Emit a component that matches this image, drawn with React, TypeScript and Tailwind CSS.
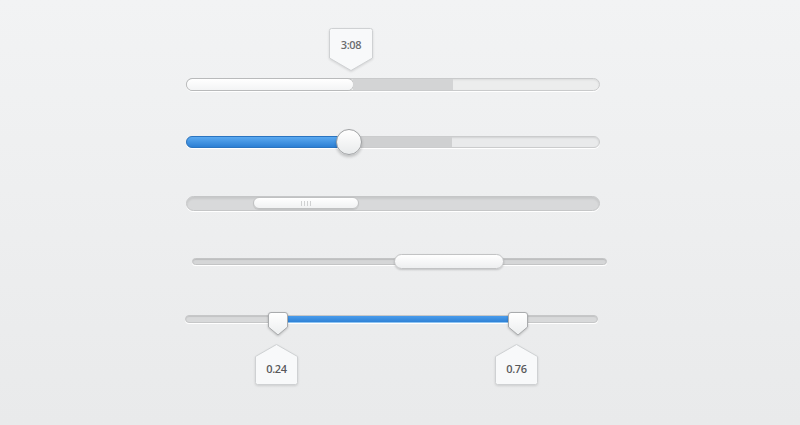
import React from "react";

const font = { fontFamily: "'Open Sans', Lato, sans-serif" };

function DownTip({ label }: { label: string }) {
  return (
    <div className="absolute left-[142px] top-[-51px] w-[44px] h-[43px]">
      <svg width="44" height="43" viewBox="0 0 44 43" className="absolute inset-0 drop-shadow-[0_1px_1px_rgba(0,0,0,0.12)]">
        <path d="M2.5 0.5 H41.5 Q43.5 0.5 43.5 2.5 V30 L22 42.5 L0.5 30 V2.5 Q0.5 0.5 2.5 0.5 Z" fill="#f8f9fa" stroke="#cfd1d3" />
      </svg>
      <div className="relative pt-[9px] text-center text-[11px] font-semibold text-[#6a6c6e] tracking-[-0.4px]" style={font}>
        {label}
      </div>
    </div>
  );
}

function UpTip({ label, left }: { label: string; left: string }) {
  return (
    <div className={`absolute top-[28px] w-[43px] h-[41px] ${left}`}>
      <svg width="43" height="41" viewBox="0 0 43 41" className="absolute inset-0 drop-shadow-[0_1px_1px_rgba(0,0,0,0.12)]">
        <path d="M21.5 0.5 L42.5 12.5 V38.5 Q42.5 40.5 40.5 40.5 H2.5 Q0.5 40.5 0.5 38.5 V12.5 Z" fill="#f8f9fa" stroke="#cfd1d3" />
      </svg>
      <div className="relative pt-[17px] text-center text-[11px] font-semibold text-[#58595b] tracking-[-0.4px]" style={font}>
        {label}
      </div>
    </div>
  );
}

function Shield({ left }: { left: string }) {
  return (
    <div className={`absolute top-[-4px] w-[20px] h-[24px] ${left}`}>
      <svg width="20" height="24" viewBox="0 0 20 24" className="drop-shadow-[0_1px_1px_rgba(0,0,0,0.2)]">
        <defs>
          <linearGradient id="sg" x1="0" y1="0" x2="0" y2="1">
            <stop offset="0" stopColor="#ffffff" />
            <stop offset="1" stopColor="#eceeef" />
          </linearGradient>
        </defs>
        <path d="M3 0.5 H17 Q19.5 0.5 19.5 3 V15 L10 23 L0.5 15 V3 Q0.5 0.5 3 0.5 Z" fill="url(#sg)" stroke="#a9abad" />
      </svg>
    </div>
  );
}

export default function App() {
  return (
    <div className="w-[800px] h-[425px] bg-gradient-to-b from-[#f2f3f4] to-[#e9eaeb] flex flex-col pt-[78px]" style={font}>
      {/* Slider 1: progress with buffer */}
      <div className="relative ml-[186px] w-[414px] h-[13px] rounded-full bg-[#eceded] border border-[#c9cacb] shadow-[inset_0_1px_2px_rgba(0,0,0,0.08),0_1px_0_#ffffff] flex">
        <div className="w-[166px] h-full rounded-full bg-gradient-to-b from-[#ffffff] to-[#f3f4f5] shadow-[0_0_0_1px_#b9babb]" />
        <div className="w-[100px] h-full bg-[#d3d4d5]" />
        <DownTip label="3:08" />
      </div>

      {/* Slider 2: blue fill with round knob */}
      <div className="relative mt-[45px] ml-[186px] w-[414px] h-[12px] rounded-full bg-[#e9eaeb] border border-[#cbcccd] shadow-[inset_0_1px_2px_rgba(0,0,0,0.1),0_1px_0_#ffffff] flex">
        <div className="w-[163px] -m-px h-[12px] rounded-l-full bg-gradient-to-b from-[#5aa9f0] to-[#2b7fd4] border border-[#2a74c0]" />
        <div className="w-[104px] h-full bg-[#cfd0d1]" />
        <div className="absolute left-[149px] top-[-8px] w-[26px] h-[26px] rounded-full bg-gradient-to-b from-[#ffffff] to-[#e9ebec] border border-[#9fa1a3] shadow-[0_2px_3px_rgba(0,0,0,0.2)]" />
      </div>

      {/* Slider 3: scrollbar */}
      <div className="mt-[48px] ml-[186px] w-[414px] h-[15px] rounded-full bg-[#d8d9da] border border-[#c5c6c7] shadow-[inset_0_2px_2px_rgba(0,0,0,0.08),0_1px_0_#ffffff] flex pl-[66px]">
        <div className="w-[106px] h-[12px] rounded-full bg-gradient-to-b from-[#ffffff] to-[#f1f2f3] border border-[#c0c1c2] shadow-[0_1px_1px_rgba(0,0,0,0.1)] flex items-center justify-center gap-[2px]">
          <div className="w-px h-[5px] bg-[#d0d1d2]" />
          <div className="w-px h-[5px] bg-[#d0d1d2]" />
          <div className="w-px h-[5px] bg-[#d0d1d2]" />
          <div className="w-px h-[5px] bg-[#d0d1d2]" />
        </div>
      </div>

      {/* Slider 4: thin track with pill thumb */}
      <div className="mt-[47px] ml-[192px] w-[415px] h-[7px] rounded-full bg-[#d5d6d7] border border-[#c3c4c5] shadow-[inset_0_1px_1px_rgba(0,0,0,0.12),0_1px_0_#ffffff] flex items-center pl-[201px]">
        <div className="w-[110px] h-[15px] shrink-0 rounded-full bg-gradient-to-b from-[#ffffff] to-[#eeeff0] border border-[#c2c3c4] shadow-[0_1px_2px_rgba(0,0,0,0.18)]" />
      </div>

      {/* Slider 5: range with two handles */}
      <div className="relative mt-[50px] ml-[185px] w-[413px] h-[8px] rounded-full bg-[#d8d9da] border border-[#c6c7c8] shadow-[inset_0_1px_1px_rgba(0,0,0,0.1),0_1px_0_#ffffff] flex pl-[92px]">
        <div className="w-[240px] h-full bg-gradient-to-b from-[#4a9ceb] to-[#2f82d6] shadow-[0_1px_0_#8fc4f2]" />
        <Shield left="left-[82px]" />
        <Shield left="left-[322px]" />
        <UpTip label="0.24" left="left-[69px]" />
        <UpTip label="0.76" left="left-[309px]" />
      </div>
    </div>
  );
}
